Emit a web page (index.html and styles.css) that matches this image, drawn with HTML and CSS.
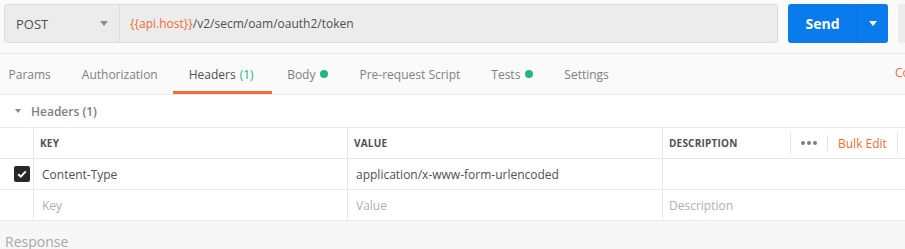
FILE: index.html
```html
<!DOCTYPE html>
<html>
<head>
<meta charset="utf-8">
<link rel="stylesheet" href="styles.css">
</head>
<body>
<div class="app">
  <div class="topbar">
    <div class="urlgroup">
      <div class="method">
        <span>POST</span>
        <span class="caret-gray"></span>
      </div>
      <div class="url"><span class="var">{{api.host}}</span>/v2/secm/oam/oauth2/token</div>
    </div>
    <div class="send">
      <span class="send-label">Send</span>
      <span class="send-arrow"><span class="caret-white"></span></span>
    </div>
    <div class="save"></div>
  </div>

  <div class="tabs">
    <div class="tab">Params</div>
    <div class="tab">Authorization</div>
    <div class="tab active">Headers <span class="count">(1)</span></div>
    <div class="tab">Body <span class="dot"></span></div>
    <div class="tab">Pre-request Script</div>
    <div class="tab">Tests <span class="dot"></span></div>
    <div class="tab">Settings</div>
    <div class="tab-right">Cookies</div>
  </div>

  <div class="headers">
    <div class="section-title"><span class="tri"></span>Headers (1)</div>
    <div class="table">
      <div class="row head">
        <div class="c0"></div>
        <div class="c1">KEY</div>
        <div class="c2">VALUE</div>
        <div class="c3">
          <span class="desc">DESCRIPTION</span>
          <span class="vsep"></span>
          <span class="dots"><i></i><i></i><i></i></span>
          <span class="vsep short"></span>
          <span class="bulk">Bulk Edit</span>
          <span class="vsep"></span>
        </div>
      </div>
      <div class="row">
        <div class="c0"><span class="check"><svg width="12" height="12" viewBox="0 0 12 12"><path d="M2.2 6.2 L4.8 8.6 L9.8 3.4" fill="none" stroke="#fff" stroke-width="2"/></svg></span></div>
        <div class="c1 val">Content-Type</div>
        <div class="c2 val">application/x-www-form-urlencoded</div>
        <div class="c3"></div>
      </div>
      <div class="row">
        <div class="c0"></div>
        <div class="c1 ph">Key</div>
        <div class="c2 ph">Value</div>
        <div class="c3 ph">Description</div>
      </div>
    </div>
  </div>

  <div class="response">Response</div>
</div>
</body>
</html>
```

FILE: styles.css
```css
html, body {
  margin: 0;
  padding: 0;
}
body {
  width: 905px;
  height: 249px;
  overflow: hidden;
  background: #f7f7f7;
  font-family: "Open Sans", "Noto Sans", sans-serif;
  font-size: 12px;
  color: #505050;
}
.app {
  width: 905px;
  overflow: hidden;
}
.topbar {
  display: flex;
  align-items: flex-start;
  height: 54px;
  box-sizing: border-box;
  padding: 4px 0 0 4px;
  background: #fafafa;
  border-bottom: 1px solid #e8e8e8;
  overflow: hidden;
}
.urlgroup {
  display: flex;
  width: 774px;
  height: 39px;
  box-sizing: border-box;
  border: 1px solid #dcdcdc;
  border-radius: 3px;
  background: #ececec;
  flex-shrink: 0;
}
.method {
  width: 115px;
  box-sizing: border-box;
  border-right: 1px solid #dcdcdc;
  display: flex;
  align-items: center;
  justify-content: space-between;
  padding: 0 11px 0 11px;
  font-size: 13px;
  color: #505050;
}
.caret-gray {
  width: 0;
  height: 0;
  border-left: 4px solid transparent;
  border-right: 4px solid transparent;
  border-top: 5px solid #8a8a8a;
}
.url {
  display: flex;
  align-items: center;
  padding-left: 10px;
  font-size: 12px;
  color: #505050;
}
.var {
  color: #f26b3a;
}
.send {
  display: flex;
  margin-left: 10px;
  width: 100px;
  height: 39px;
  background: #097bed;
  border-radius: 3px;
  color: #fff;
  flex-shrink: 0;
}
.send-label {
  width: 69px;
  display: flex;
  align-items: center;
  justify-content: center;
  font-weight: 700;
  font-size: 14px;
  border-right: 1px solid #0a6fd6;
}
.send-arrow {
  flex: 1;
  display: flex;
  align-items: center;
  justify-content: center;
}
.caret-white {
  width: 0;
  height: 0;
  border-left: 4px solid transparent;
  border-right: 4px solid transparent;
  border-top: 5px solid #fff;
}
.save {
  margin-left: 10px;
  width: 40px;
  height: 39px;
  background: #ececec;
  border-radius: 3px;
  flex-shrink: 0;
}

.tabs {
  display: flex;
  align-items: stretch;
  height: 41px;
  box-sizing: border-box;
  background: #fafafa;
  border-bottom: 1px solid #e8e8e8;
  margin-left: -7px;
  overflow: hidden;
}
.tab {
  display: flex;
  align-items: center;
  padding: 3px 15.5px 0 15.5px;
  color: #808080;
  font-size: 12px;
  white-space: nowrap;
  border-bottom: 3px solid transparent;
  flex-shrink: 0;
}
.tab.active {
  color: #505050;
  border-bottom-color: #f26b3a;
  padding-left: 16px;
  padding-right: 18px;
  margin-left: -0.5px;
}
.count {
  color: #26b47f;
  margin-left: 4px;
}
.dot {
  display: inline-block;
  width: 8px;
  height: 8px;
  border-radius: 50%;
  background: #26b47f;
  margin-left: 5px;
}
.tab-right {
  margin-left: auto;
  margin-right: -40px;
  display: flex;
  align-items: center;
  padding-top: 0;
  padding-bottom: 3px;
  color: #f26b3a;
  font-size: 12px;
  width: 50px;
  flex-shrink: 0;
}

.headers {
  background: #fff;
}
.section-title {
  height: 32px;
  display: flex;
  align-items: center;
  padding-left: 15px;
  color: #808080;
  font-weight: 600;
  font-size: 12px;
  border-bottom: 1px solid #e8e8e8;
}
.tri {
  width: 0;
  height: 0;
  border-left: 3px solid transparent;
  border-right: 3px solid transparent;
  border-top: 4px solid #8a8a8a;
  margin-right: 10px;
}
.table {
  border-bottom: 1px solid #e8e8e8;
}
.row {
  display: grid;
  grid-template-columns: 34px 314px 315px 1fr;
  height: 31px;
  box-sizing: border-box;
  border-bottom: 1px solid #e8e8e8;
}
.row:last-child {
  border-bottom: none;
  height: 30px;
}
.row > div {
  display: flex;
  align-items: center;
  border-right: 1px solid #e8e8e8;
  padding-left: 8px;
  white-space: nowrap;
  overflow: hidden;
}
.row > .c0 {
  padding-left: 14px;
}
.row > .c3 {
  border-right: none;
  padding-left: 6px;
}
.row.head > div {
  font-size: 10px;
  font-weight: 700;
  color: #505050;
  letter-spacing: 0.2px;
}
.row.head > .c1, .row.head > .c2 {
  padding-left: 6px;
}
.row.head > .c0 {
  padding-left: 0;
}
.c1.val, .c2.val {
  color: #505050;
}
.ph {
  color: #b0b0b0;
}
.desc {
  width: 121px;
  flex-shrink: 0;
}
.vsep {
  width: 1px;
  height: 22px;
  background: #e4e4e4;
  flex-shrink: 0;
}
.vsep.short {
  height: 16px;
}
.dots {
  display: flex;
  gap: 2px;
  padding: 0 10px;
}
.dots i {
  display: block;
  width: 4px;
  height: 4px;
  border-radius: 50%;
  background: #808080;
}
.bulk {
  font-size: 12px;
  font-weight: 400;
  color: #f26b3a;
  padding: 0 10px;
  letter-spacing: 0;
}
.check {
  width: 16px;
  height: 16px;
  border-radius: 2px;
  background: #282828;
  display: flex;
  align-items: center;
  justify-content: center;
}
.response {
  padding: 11px 0 0 5px;
  font-size: 14px;
  color: #a8a8a8;
}
```
